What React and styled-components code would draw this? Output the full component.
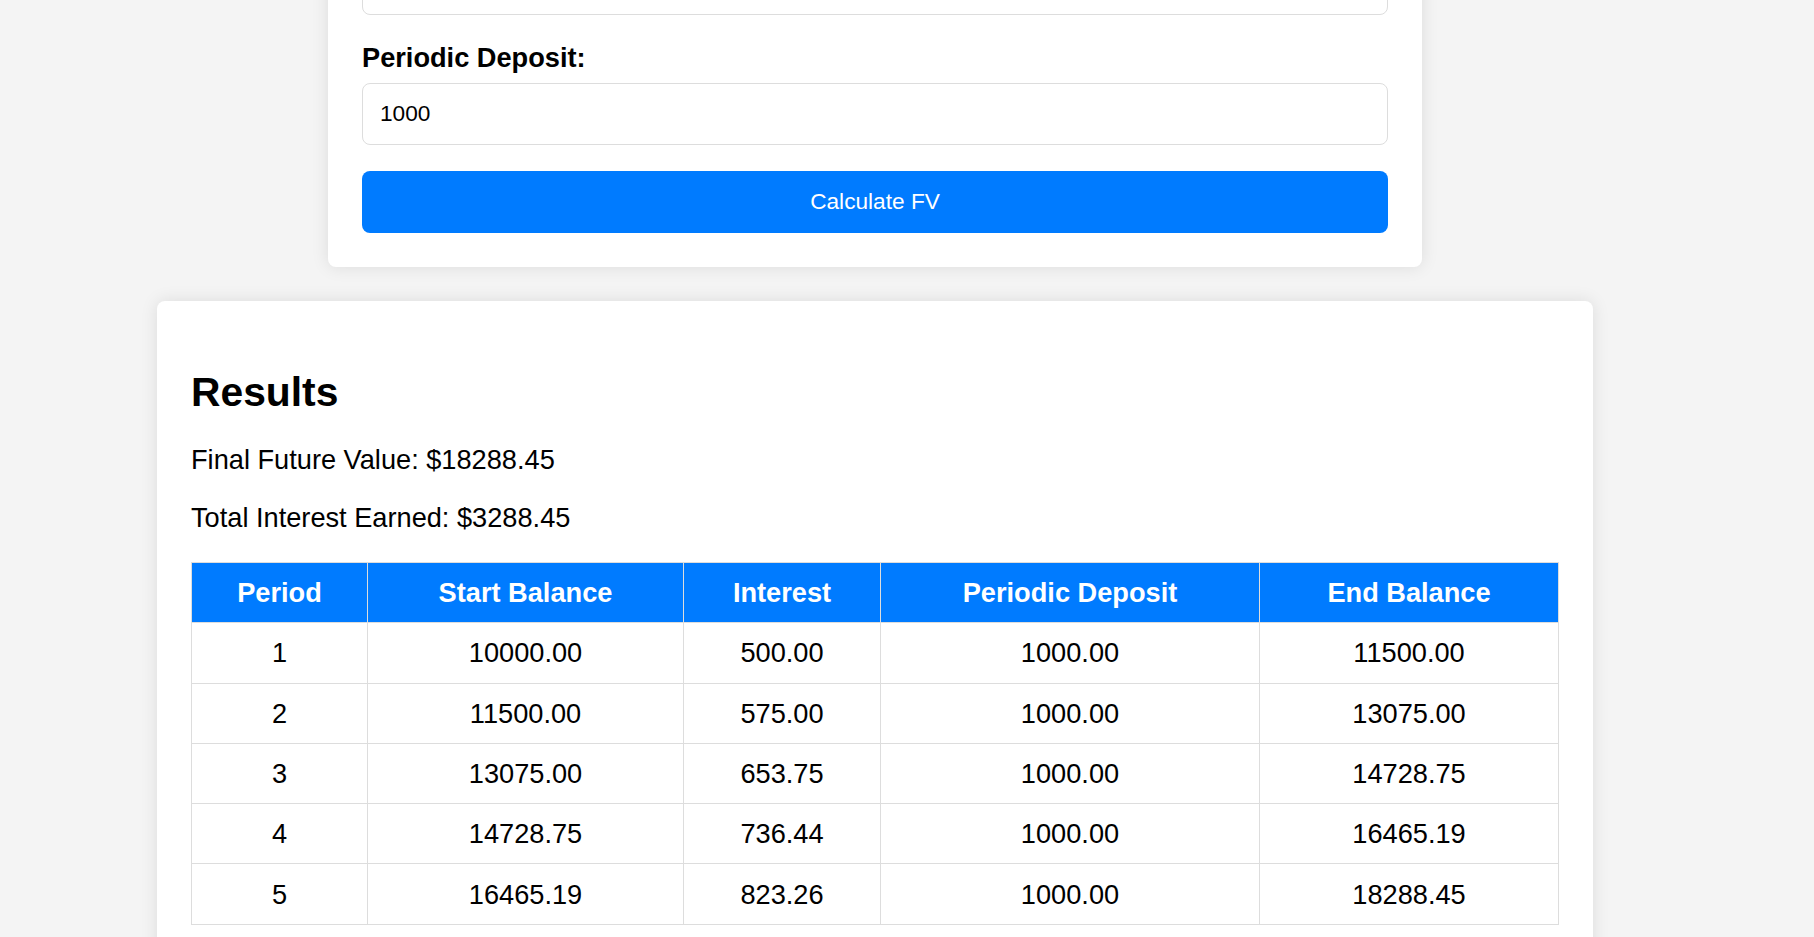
import { useState } from "react"
import styled, { createGlobalStyle } from "styled-components"

const GlobalStyle = createGlobalStyle`
    body {
        margin: 0;
        background: #f4f4f4;
        font-family: "Liberation Sans", Arial, sans-serif;
        color: #000;
        overflow: hidden;
    }
`

// values of the fields above the visible part of the form
const PRESENT_VALUE = 10000
const RATE = 5
const DEFAULT_PERIODS = 5

const buildSchedule = (pv, rate, periods, deposit) => {
    const rows = []
    let balance = pv
    for (let i = 1; i <= periods; i++) {
        const interest = balance * rate / 100
        const end = balance + interest + deposit
        rows.push({ period: i, start: balance, interest, deposit, end })
        balance = end
    }
    return rows
}

const columns = [
    { label: "Period", width: 176 },
    { label: "Start Balance", width: 316 },
    { label: "Interest", width: 197 },
    { label: "Periodic Deposit", width: 379 },
    { label: "End Balance", width: 299 },
]

export default function App() {
    const [periods, setPeriods] = useState("")
    const [deposit, setDeposit] = useState("1000")
    const [rows, setRows] = useState(() => buildSchedule(PRESENT_VALUE, RATE, DEFAULT_PERIODS, 1000))

    const handleSubmit = (e) => {
        e.preventDefault()
        setRows(buildSchedule(
            PRESENT_VALUE,
            RATE,
            parseInt(periods) || DEFAULT_PERIODS,
            parseFloat(deposit) || 0
        ))
    }

    const last = rows[rows.length - 1]
    const finalValue = last ? last.end : 0
    const totalInterest = rows.reduce((sum, r) => sum + r.interest, 0)

    return (
        <>
            <GlobalStyle />
            <Page>
                <FormCard>
                    <form onSubmit={handleSubmit} autoComplete="off">
                        <Field>
                            <Input
                                type="number"
                                aria-label="Number of Periods"
                                value={periods}
                                onChange={(e) => setPeriods(e.target.value)}
                            />
                        </Field>
                        <Field>
                            <Label htmlFor="deposit">Periodic Deposit:</Label>
                            <Input
                                id="deposit"
                                type="number"
                                value={deposit}
                                onChange={(e) => setDeposit(e.target.value)}
                            />
                        </Field>
                        <Button type="submit">Calculate FV</Button>
                    </form>
                </FormCard>

                <ResultsCard>
                    <ResultsTitle>Results</ResultsTitle>
                    <Summary>Final Future Value: ${finalValue.toFixed(2)}</Summary>
                    <Summary>Total Interest Earned: ${totalInterest.toFixed(2)}</Summary>
                    <Table>
                        <colgroup>
                            {columns.map((c) => <Col key={c.label} $w={c.width} />)}
                        </colgroup>
                        <thead>
                            <tr>
                                {columns.map((c) => <Th key={c.label}>{c.label}</Th>)}
                            </tr>
                        </thead>
                        <tbody>
                            {rows.map((r) => (
                                <tr key={r.period}>
                                    <Td>{r.period}</Td>
                                    <Td>{r.start.toFixed(2)}</Td>
                                    <Td>{r.interest.toFixed(2)}</Td>
                                    <Td>{r.deposit.toFixed(2)}</Td>
                                    <Td>{r.end.toFixed(2)}</Td>
                                </tr>
                            ))}
                        </tbody>
                    </Table>
                </ResultsCard>
            </Page>
        </>
    )
}

// the page is shown scrolled down, so the top of the form sits above the window
const Page = styled.main`
    width: 1750px;
    margin-top: -81px;
    display: flex;
    flex-direction: column;
    align-items: center;
    gap: 34px;
`

const Card = styled.section`
    background: #fff;
    border-radius: 8px;
    box-shadow: 0 0 17px rgba(0, 0, 0, 0.1);
    padding: 34px;
    box-sizing: border-box;
`

const FormCard = styled(Card)`
    width: 1094px;
`

const ResultsCard = styled(Card)`
    width: 1436px;
`

const Field = styled.div`
    margin-bottom: 26.5px;
`

const Label = styled.label`
    display: block;
    font-size: 27.2px;
    line-height: 31px;
    font-weight: 700;
    margin-bottom: 10px;
`

const Input = styled.input`
    display: block;
    width: 100%;
    height: 62px;
    box-sizing: border-box;
    padding: 0 17px;
    border: 1.5px solid #ddd;
    border-radius: 8px;
    font-family: "Liberation Sans", Arial, sans-serif;
    font-size: 22.67px;
    color: #000;
    background: #fff;
    outline: none;
    -moz-appearance: textfield;
    &::-webkit-outer-spin-button,
    &::-webkit-inner-spin-button {
        -webkit-appearance: none;
        margin: 0;
    }
`

const Button = styled.button`
    display: block;
    width: 100%;
    height: 61.7px;
    border: none;
    border-radius: 8px;
    background: #007bff;
    color: #fff;
    font-family: "Liberation Sans", Arial, sans-serif;
    font-size: 22.67px;
    cursor: pointer;
    &:hover {
        background: #0069d9;
    }
`

const ResultsTitle = styled.h2`
    font-size: 40.8px;
    line-height: 46.3px;
    font-weight: 700;
    margin: 34px 0 29px;
`

const Summary = styled.p`
    font-size: 27.2px;
    line-height: 31px;
    margin: 0 0 27px;
`

const Table = styled.table`
    width: 100%;
    table-layout: fixed;
    border-collapse: collapse;
    margin-top: 29px;
    font-size: 27.2px;
    line-height: 31px;
`

const Col = styled.col`
    width: ${(p) => p.$w}px;
`

const Th = styled.th`
    background: #007bff;
    color: #fff;
    font-weight: 700;
    padding: 14.15px;
    border: 1px solid #ddd;
    text-align: center;
`

const Td = styled.td`
    padding: 14.15px;
    border: 1px solid #ddd;
    text-align: center;
`
